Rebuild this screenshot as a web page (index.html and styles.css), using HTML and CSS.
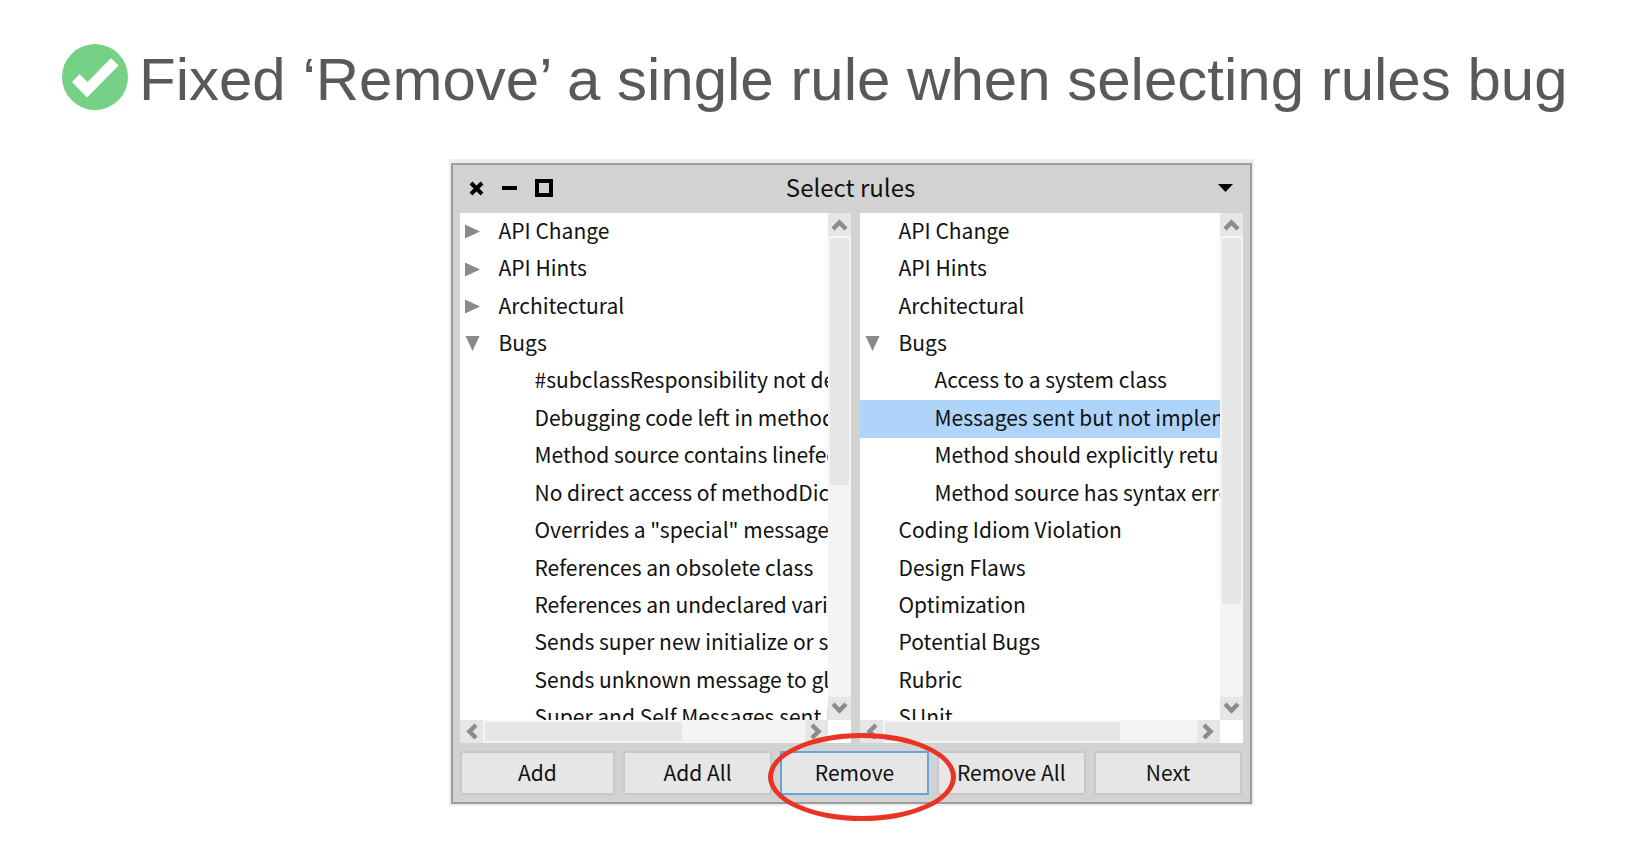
FILE: index.html
```html
<!DOCTYPE html>
<html lang="en">
<head>
<meta charset="utf-8">
<title>Fixed ‘Remove’ a single rule when selecting rules bug</title>
<link rel="stylesheet" href="styles.css">
</head>
<body>
<svg class="defs" aria-hidden="true">
  <symbol id="chevron" viewBox="0 0 23 23"><path d="M5 16L11.500 9.500L18 16" fill="none" stroke="#8c8c8c" stroke-width="4.500"/></symbol>
  <symbol id="closed" viewBox="0 0 15 15"><path d="M0 0.500L15 7.500L0 14.500Z" fill="#8a8a8a"/></symbol>
  <symbol id="open" viewBox="0 0 15 15"><path d="M0.500 0H14.500L7.500 15Z" fill="#8a8a8a"/></symbol>
</svg>
<main class="slide">
  <header class="headline">
    <svg class="check" viewBox="0 0 66 66" aria-hidden="true"><circle cx="33" cy="33" r="33" fill="#74d185"/><path d="M10 38L17.500 30L25.500 38L49 14L56.500 21.500L25 53.500Z" fill="#fff"/></svg>
    <h1>Fixed ‘Remove’ a single rule when selecting rules bug</h1>
  </header>
  <div class="stage">
  <section class="window" aria-labelledby="window-title">
    <div class="frame">
      <div class="titlebar">
        <div class="controls">
          <button aria-label="Close"><svg width="15" height="15" viewBox="0 0 15 15"><path d="M2 2L13 13M13 2L2 13" stroke="#000" stroke-width="4"/></svg></button>
          <button aria-label="Minimize"><svg width="15" height="15" viewBox="0 0 15 15"><path d="M0 7H15" stroke="#000" stroke-width="4"/></svg></button>
          <button aria-label="Maximize"><svg width="18" height="18" viewBox="0 0 18 18"><path d="M2 2H16V16H2Z" fill="none" stroke="#000" stroke-width="4"/></svg></button>
        </div>
        <h2 id="window-title">Select rules</h2>
        <button class="menu" aria-label="Window menu"><svg width="15" height="8" viewBox="0 0 15 8"><path d="M0 0H15L7.500 8Z"/></svg></button>
      </div>
      <div class="panes">
        <div class="pane available">
          <div class="view">
            <ul class="tree">
              <li><button class="toggle" aria-label="Expand API Change"><svg><use href="#closed"/></svg></button>API Change</li>
              <li><button class="toggle" aria-label="Expand API Hints"><svg><use href="#closed"/></svg></button>API Hints</li>
              <li><button class="toggle" aria-label="Expand Architectural"><svg><use href="#closed"/></svg></button>Architectural</li>
              <li><button class="toggle" aria-label="Collapse Bugs"><svg><use href="#open"/></svg></button>Bugs</li>
              <li class="child">#subclassResponsibility not defined</li>
              <li class="child">Debugging code left in methods</li>
              <li class="child">Method source contains linefeeds</li>
              <li class="child">No direct access of methodDict</li>
              <li class="child">Overrides a "special" message</li>
              <li class="child">References an obsolete class</li>
              <li class="child">References an undeclared variable</li>
              <li class="child">Sends super new initialize or self</li>
              <li class="child">Sends unknown message to global</li>
              <li class="child">Super and Self Messages sent but</li>
            </ul>
          </div>
          <div class="vbar">
            <button aria-label="Scroll up"><svg><use href="#chevron"/></svg></button>
            <div class="track"><div class="thumb"></div></div>
            <button aria-label="Scroll down"><svg class="down"><use href="#chevron"/></svg></button>
          </div>
          <div class="hbar">
            <button aria-label="Scroll left"><svg class="left"><use href="#chevron"/></svg></button>
            <div class="track"><div class="thumb"></div></div>
            <button aria-label="Scroll right"><svg class="right"><use href="#chevron"/></svg></button>
          </div>
        </div>
        <div class="pane selected-rules">
          <div class="view">
            <ul class="tree">
              <li>API Change</li>
              <li>API Hints</li>
              <li>Architectural</li>
              <li><button class="toggle" aria-label="Collapse Bugs"><svg><use href="#open"/></svg></button>Bugs</li>
              <li class="child">Access to a system class</li>
              <li class="child current">Messages sent but not implemented</li>
              <li class="child">Method should explicitly return</li>
              <li class="child">Method source has syntax errors</li>
              <li>Coding Idiom Violation</li>
              <li>Design Flaws</li>
              <li>Optimization</li>
              <li>Potential Bugs</li>
              <li>Rubric</li>
              <li>SUnit</li>
            </ul>
          </div>
          <div class="vbar">
            <button aria-label="Scroll up"><svg><use href="#chevron"/></svg></button>
            <div class="track"><div class="thumb"></div></div>
            <button aria-label="Scroll down"><svg class="down"><use href="#chevron"/></svg></button>
          </div>
          <div class="hbar">
            <button aria-label="Scroll left"><svg class="left"><use href="#chevron"/></svg></button>
            <div class="track"><div class="thumb"></div></div>
            <button aria-label="Scroll right"><svg class="right"><use href="#chevron"/></svg></button>
          </div>
        </div>
      </div>
      <div class="actions">
        <div class="action first"><button>Add</button></div>
        <div class="action"><button>Add All</button></div>
        <div class="action"><button class="focused">Remove</button><span class="ring"></span></div>
        <div class="action"><button>Remove All</button></div>
        <div class="action"><button>Next</button></div>
      </div>
    </div>
  </section>
  </div>
</main>
</body>
</html>
```
FILE: styles.css
```css
* { box-sizing: border-box; }
body { margin: 0; background: #fff; color: #111; font-family: "Noto Sans CJK SC", "Noto Sans", sans-serif; font-size: 21px; }
button { margin: 0; padding: 0; border: 0; background: none; color: inherit; font: inherit; }
svg { display: block; }
.defs { position: absolute; width: 0; height: 0; }
.slide { padding: 44px 62px; }
.headline { display: flex; align-items: flex-start; gap: 11px; }
.check { flex: none; width: 66px; height: 66px; }
h1 { margin: 0; color: #595959; font: 400 60px/72px "Liberation Sans", Arial, sans-serif; white-space: nowrap; }
.stage { display: flex; justify-content: center; padding: 43px 0 0 74px; }
.window { width: 805px; max-width: 100%; padding: 4px 2px 2px; background: #eee; }
.frame { padding: 0 7px 7px; border: 2px solid #9c9c9c; background: #d2d2d2; }
.titlebar { display: grid; grid-template-columns: 1fr auto 1fr; align-items: center; height: 48px; padding: 0 10px 2px 9px; }
.controls { display: flex; align-items: center; gap: 18px; }
h2 { margin: 0; padding-bottom: 3px; font-size: 24px; line-height: 40px; font-weight: 400; }
.menu { justify-self: end; }
.panes { display: flex; gap: 9px; }
.pane { display: grid; grid-template: 507px 23px / minmax(0, 1fr) 23px; background: #fff; }
.available { flex: 391; }
.selected-rules { flex: 383; }
.view { overflow: hidden; }
.tree { display: grid; grid-template-rows: repeat(14, 1fr); height: 524px; margin: 0; padding: 0; list-style: none; }
.tree li { display: flex; align-items: center; padding: 0 0 4px 39px; line-height: 32px; white-space: nowrap; }
.tree .child { padding-left: 75px; }
.tree .current { background: #aed4fa; }
.toggle { width: 15px; padding-top: 4px; margin-left: -34px; margin-right: 19px; }
.toggle svg { width: 15px; height: 15px; }
.vbar, .hbar { display: flex; background: #f4f4f4; }
.vbar { flex-direction: column; }
.vbar button, .hbar button { flex: none; width: 23px; height: 23px; background: #e6e6e6; }
.vbar svg, .hbar svg { width: 23px; height: 23px; }
.down { transform: rotate(180deg); }
.left { transform: rotate(-90deg); }
.right { transform: rotate(90deg); }
.track { flex: 1; padding: 2px; }
.thumb { height: 100%; background: #e6e6e6; }
.available .vbar .thumb { height: 54%; }
.selected-rules .vbar .thumb { height: 80%; }
.available .hbar .thumb { width: 62%; }
.selected-rules .hbar .thumb { width: 76%; }
.actions { display: flex; gap: 8px; margin-top: 8px; }
.action { flex: 149; position: relative; }
.first { flex: 156; }
.action button { width: 100%; height: 44px; padding-bottom: 2px; border: 2px solid #c8c8c8; background: #e6e6e6; line-height: 38px; }
.action .focused { border-color: #66a3e0; }
.ring { position: absolute; z-index: 1; inset: -18px -27px -26px -12px; border: 5px solid #ea3323; border-radius: 50%; pointer-events: none; }
```
